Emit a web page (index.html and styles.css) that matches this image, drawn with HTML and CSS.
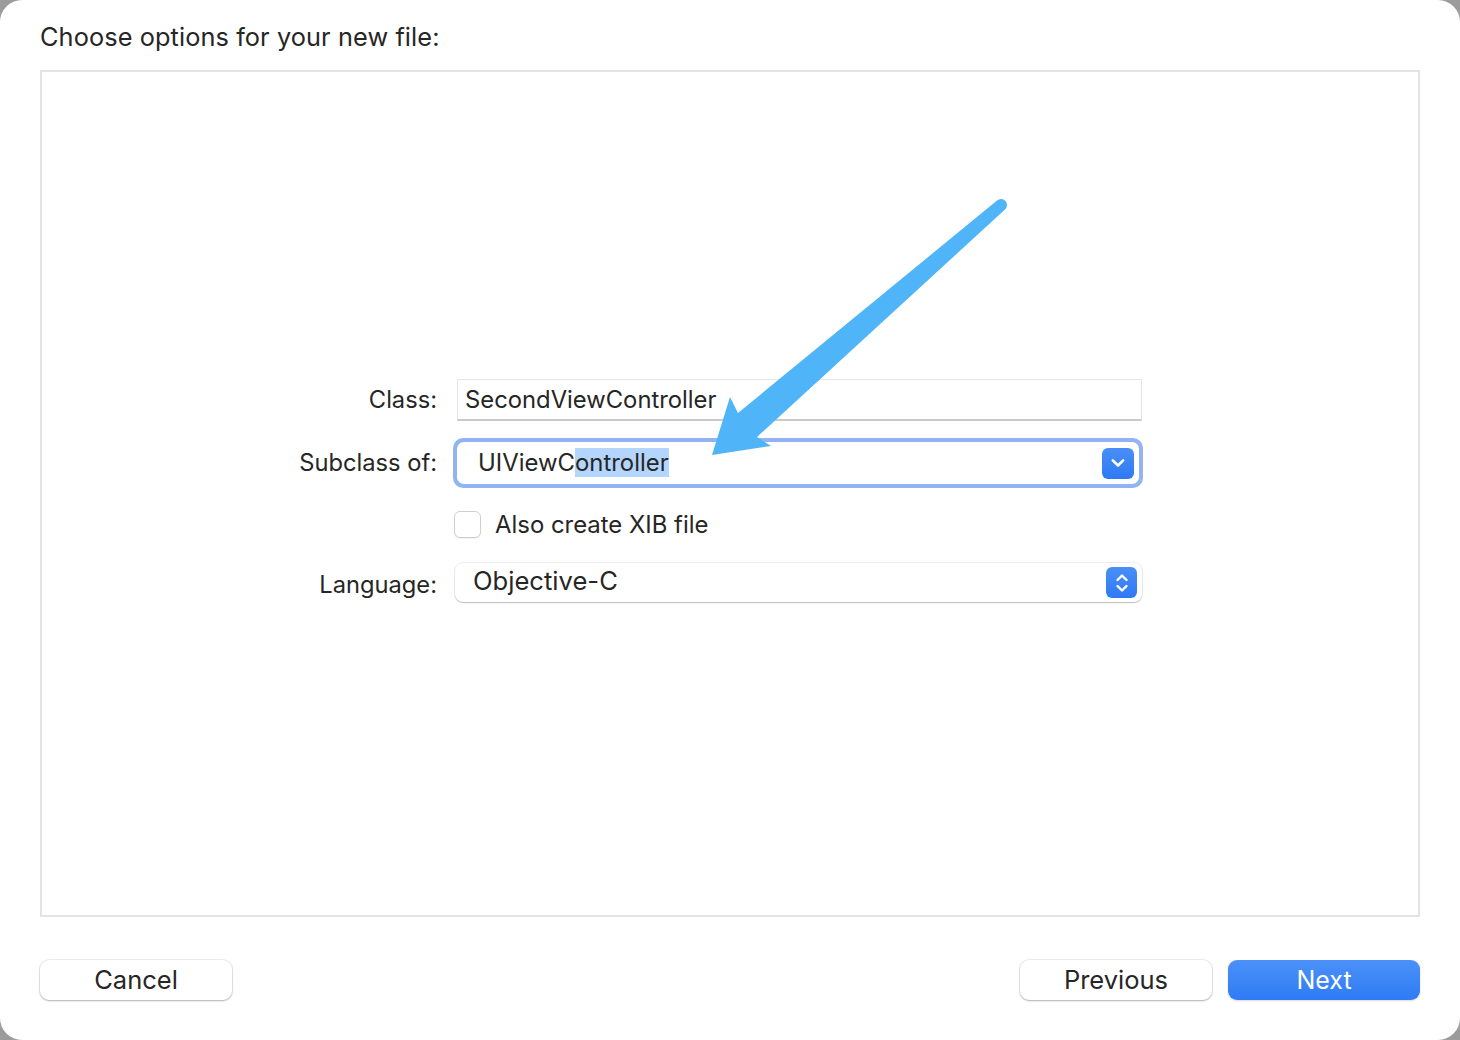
FILE: index.html
```html
<!DOCTYPE html>
<html>
<head>
<meta charset="utf-8">
<link rel="stylesheet" href="styles.css">
</head>
<body>
<div class="window">
  <h1 class="title">Choose options for your new file:</h1>
  <div class="panel">
    <div class="form">
      <div class="row row-class">
        <label class="lbl">Class:</label>
        <div class="textfield">SecondViewController</div>
      </div>
      <div class="row row-subclass">
        <label class="lbl">Subclass of:</label>
        <div class="combo">
          <div class="combo-inner">
            <span class="combo-text">UIViewC<span class="sel">ontroller</span></span>
            <span class="combo-btn">
              <svg width="16" height="10" viewBox="0 0 16 10"><path d="M2.8 2.3 L8 7.5 L13.2 2.3" fill="none" stroke="#fff" stroke-width="2.6" stroke-linecap="round" stroke-linejoin="round"/></svg>
            </span>
          </div>
        </div>
      </div>
      <div class="row row-check">
        <span class="lbl"></span>
        <div class="check-row">
          <span class="checkbox"></span>
          <span class="check-text">Also create XIB file</span>
        </div>
      </div>
      <div class="row row-lang">
        <label class="lbl">Language:</label>
        <div class="popup">
          <span class="popup-text">Objective-C</span>
          <span class="stepper">
            <svg width="16" height="24" viewBox="0 0 16 24"><path d="M3.5 9 L8 4.5 L12.5 9" fill="none" stroke="#fff" stroke-width="2.4" stroke-linecap="round" stroke-linejoin="round"/><path d="M3.5 15 L8 19.5 L12.5 15" fill="none" stroke="#fff" stroke-width="2.4" stroke-linecap="round" stroke-linejoin="round"/></svg>
          </span>
        </div>
      </div>
    </div>
  </div>
  <div class="footer">
    <button class="btn">Cancel</button>
    <div class="right-btns">
      <button class="btn">Previous</button>
      <button class="btn primary">Next</button>
    </div>
  </div>
  <svg class="annotation" width="1460" height="1040" viewBox="0 0 1460 1040">
    <path d="M712 455 L730 397 L738 413 L997 200.5 A6 6 0 0 1 1005 209.5 L757 437 L771 446 Z" fill="#4fb5f8"/>
  </svg>
</div>
</body>
</html>
```

FILE: styles.css
```css
html, body {
  margin: 0;
  padding: 0;
}
body {
  background: #9c9c9c;
  font-family: Inter, "Liberation Sans", Arial, sans-serif;
  color: #262626;
}
.window {
  position: relative;
  width: 1460px;
  height: 1040px;
  background: #ffffff;
  border-radius: 22px;
  box-sizing: border-box;
  padding: 20px 40px 0 40px;
  display: flex;
  flex-direction: column;
}
.title {
  margin: 0;
  font-size: 25.3px;
  font-weight: 400;
  line-height: 34px;
  height: 34px;
  letter-spacing: 0.1px;
}
.panel {
  margin-top: 16px;
  height: 847px;
  box-sizing: border-box;
  border: 2px solid #e3e3e3;
  padding-top: 307px;
}
.form {
  display: flex;
  flex-direction: column;
}
.row {
  display: flex;
  align-items: center;
  gap: 18px;
}
.row-subclass { margin-top: 17px; }
.row-check { margin-top: 22px; }
.row-lang { margin-top: 24px; }
.lbl {
  width: 395px;
  flex: none;
  text-align: right;
  font-size: 23.7px;
  line-height: 28px;
}
.row-lang .lbl { margin-top: 4px; }
.textfield {
  margin-left: 2px;
  width: 685px;
  height: 42px;
  box-sizing: border-box;
  border: 1px solid #e6e6e6;
  border-bottom: 2px solid #c9c9c9;
  padding-left: 7px;
  font-size: 23.8px;
  line-height: 39px;
}
.combo {
  margin-left: -2px;
  width: 690px;
  height: 50px;
  box-sizing: border-box;
  border-radius: 10px;
  background: #93b4f2;
  padding: 4px;
}
.combo-inner {
  height: 42px;
  background: #fff;
  border-radius: 7px;
  display: flex;
  align-items: center;
  justify-content: space-between;
  padding: 0 5px 0 21px;
}
.combo-text {
  font-size: 23.9px;
  line-height: 28px;
}
.sel {
  background: #b4d6fe;
}
.combo-btn {
  width: 32px;
  height: 31px;
  border-radius: 6px;
  background: linear-gradient(#4a8ff7, #2f79f3);
  display: flex;
  align-items: center;
  justify-content: center;
}
.check-row {
  display: flex;
  align-items: center;
  gap: 14px;
  margin-left: -1px;
}
.checkbox {
  width: 27px;
  height: 27px;
  box-sizing: border-box;
  border: 1px solid #cfcfcf;
  border-radius: 6px;
  background: #fff;
  box-shadow: 0 1px 1px rgba(0,0,0,0.06);
}
.check-text {
  font-size: 23.9px;
  line-height: 28px;
  margin-top: 1px;
}
.popup {
  width: 687px;
  height: 39px;
  box-sizing: border-box;
  border-radius: 8px;
  background: #fff;
  box-shadow: 0 0 0 1px rgba(0,0,0,0.07), 0 1px 1px rgba(0,0,0,0.2);
  display: flex;
  align-items: center;
  justify-content: space-between;
  padding: 0 5px 0 18px;
}
.popup-text {
  font-size: 25.6px;
  line-height: 30px;
  margin-top: -3px;
}
.stepper {
  width: 31px;
  height: 31px;
  border-radius: 6px;
  background: linear-gradient(#4a8ff7, #2f79f3);
  display: flex;
  align-items: center;
  justify-content: center;
}
.footer {
  margin-top: 43px;
  display: flex;
  justify-content: space-between;
}
.right-btns {
  display: flex;
  gap: 16px;
}
.btn {
  width: 192px;
  height: 40px;
  border: none;
  border-radius: 9px;
  background: #fff;
  box-shadow: 0 0 0 1px rgba(0,0,0,0.07), 0 1px 2px rgba(0,0,0,0.25);
  font-family: Inter, "Liberation Sans", Arial, sans-serif;
  font-size: 25.5px;
  color: #262626;
  padding: 0;
  line-height: 38px;
}
.btn.primary {
  background: linear-gradient(#4b91f8, #2e7bf5);
  color: #fff;
  font-size: 25px;
  box-shadow: 0 1px 2px rgba(0,0,0,0.15);
}
.annotation {
  position: absolute;
  left: 0;
  top: 0;
  pointer-events: none;
}
```
